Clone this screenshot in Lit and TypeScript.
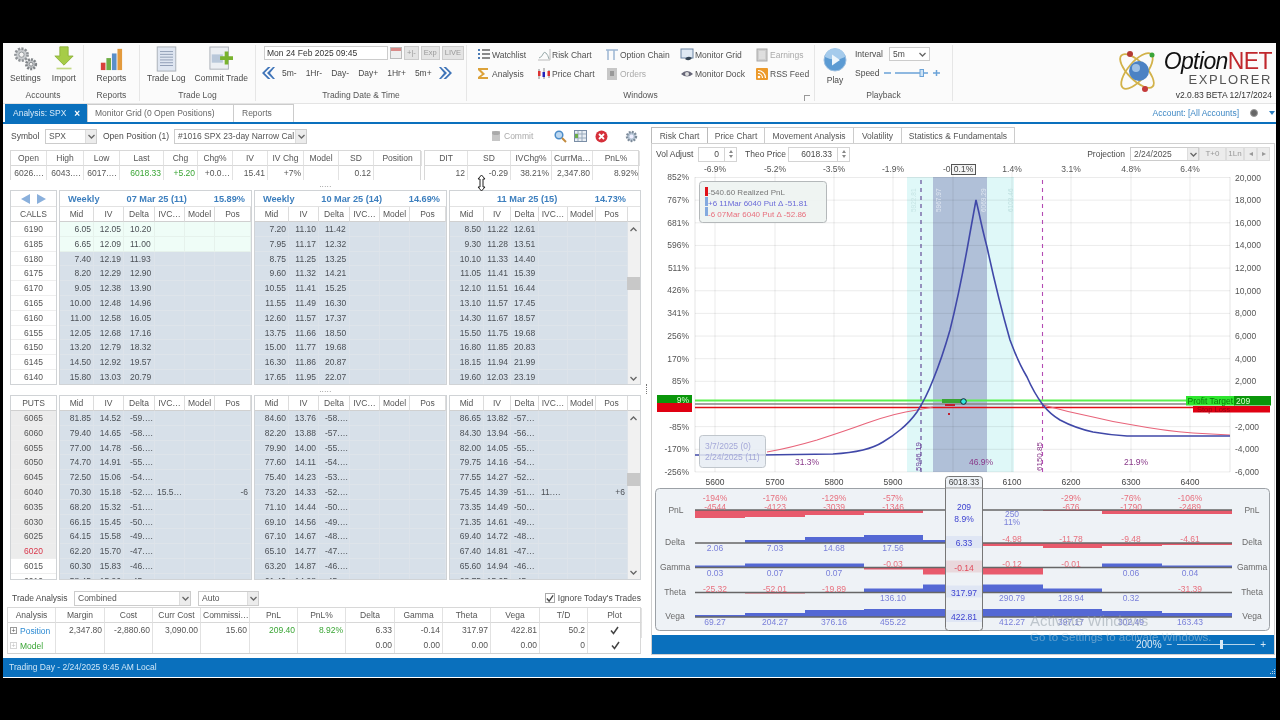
import {customElement} from "lit/decorators.js";
import {css, html, svg, LitElement} from "lit";

// ---- icons -----------------------------------------------------------------
const gears = html`<svg width="30" height="26" viewBox="0 0 34 30">
  <circle cx="13" cy="10" r="7" fill="#c9cccf" stroke="#8f9397" stroke-width="3" stroke-dasharray="2.4 1.6"/>
  <circle cx="13" cy="10" r="3" fill="#f4f4f4" stroke="#8a8e92"/>
  <circle cx="24" cy="21" r="5.5" fill="#c3c6c9" stroke="#7f8387" stroke-width="3" stroke-dasharray="2.2 1.4"/>
  <circle cx="24" cy="21" r="2.2" fill="#f4f4f4" stroke="#7f8387"/>
</svg>`;
const importIcon = html`<svg width="22" height="25" viewBox="0 0 26 30">
  <path d="M8 1h10v11h6L13 23 2 12h6z" fill="#a6cc48" stroke="#8aae36"/>
  <path d="M4 26h18v2H4z" fill="#c3d984"/>
</svg>`;
const barsIcon = html`<svg width="24" height="26" viewBox="0 0 26 28">
  <rect x="2" y="18" width="5" height="8" fill="#d8413c"/><rect x="8" y="13" width="5" height="13" fill="#6fae45"/>
  <rect x="14" y="8" width="5" height="18" fill="#5a8fc9"/><rect x="20" y="3" width="5" height="23" fill="#e39a3d"/>
</svg>`;
const docIcon = html`<svg width="21" height="26" viewBox="0 0 22 28">
  <rect x="1" y="1" width="20" height="26" fill="#dfe6f1" stroke="#a9aeb6"/>
  <path d="M4 6h14M4 9h14M4 12h14M4 15h14M4 18h14M4 21h14" stroke="#8c9bb3"/>
</svg>`;
const commitIcon = html`<svg width="24" height="26" viewBox="0 0 26 28">
  <rect x="1" y="1" width="20" height="24" fill="#eceff3" stroke="#a9aeb6"/>
  <rect x="3" y="9" width="12" height="9" fill="#b9c8da"/>
  <path d="M19 6v14M12 13h14" stroke="#79b32f" stroke-width="4"/>
</svg>`;
const dblLeft = html`<svg width="13" height="12" viewBox="0 0 13 12"><path d="M6 0L0 6l6 6h2.5l-6-6 6-6zM11 0L5 6l6 6h2L8 6l5-6z" fill="#3f74b8"/></svg>`;
const dblRight = html`<svg width="13" height="12" viewBox="0 0 13 12"><path d="M7 0l6 6-6 6H4.5l6-6-6-6zM2 0l6 6-6 6H0l5-6-5-6z" fill="#3f74b8"/></svg>`;
const play = html`<svg width="24" height="24" viewBox="0 0 24 24">
  <circle cx="12" cy="12" r="11" fill="#5c9bd3" stroke="#9dbfe0"/>
  <path d="M2 9a10 9 0 0 1 20 0q-10 5-20 0z" fill="#a5cbec"/>
  <path d="M9 6.5l8 5.5-8 5.5z" fill="#eef6fc"/>
</svg>`;
const chevron = html`<svg width="7" height="5" viewBox="0 0 7 5"><path d="M.5 1l3 3 3-3" fill="none" stroke="#666" stroke-width="1.3"/></svg>`;
const check = html`<svg width="9" height="9" viewBox="0 0 9 9"><path d="M1 4.5l2.5 3L8 1" fill="none" stroke="#444" stroke-width="1.5"/></svg>`;

const winIcons: Record<string, unknown> = {
  list: svg`<path d="M1 2h2M1 6h2M1 10h2" stroke="#4b7bb5" stroke-width="2"/><path d="M5 2h8M5 6h8M5 10h8" stroke="#666" stroke-width="1.3"/>`,
  sigma: svg`<path d="M1 1h10v2H4l4 4-4 3h7v2H1V10l4-3-4-4z" fill="#dca23a"/>`,
  risk: svg`<path d="M1 12h12V1" fill="none" stroke="#bbb"/><path d="M2 10q3-1 4-4t3-1 3 6" fill="none" stroke="#9aa"/>`,
  price: svg`<path d="M2 2v10M7 1v11M12 3v8" stroke="#888"/><rect x="1" y="4" width="2.5" height="5" fill="#d33"/><rect x="5.5" y="5" width="2.5" height="5" fill="#22b"/><rect x="10.5" y="4" width="2.5" height="5" fill="#d33"/>`,
  chain: svg`<path d="M1 2h12M3 2v10M9 2v10" stroke="#9db7d4" stroke-width="1.5" fill="none"/>`,
  orders: svg`<rect x="2" y="1" width="10" height="12" fill="#c7c7c7"/><rect x="5" y="4" width="4" height="5" fill="#999"/>`,
  grid: svg`<rect x="1" y="1" width="12" height="9" fill="#dfe9f4" stroke="#6d85a4"/><path d="M5 11q3-4 7-1 -3 4-7 1z" fill="#345"/>`,
  dock: svg`<path d="M1 7q6-6 12 0-6 5-12 0z" fill="#667"/><circle cx="7" cy="7" r="2" fill="#ddd"/>`,
  earnings: svg`<rect x="2" y="1" width="10" height="12" fill="#cfcfcf" stroke="#aaa"/><path d="M4 4h6M4 6h6M4 8h6M4 10h6" stroke="#eee"/>`,
  rss: svg`<rect x="1" y="1" width="12" height="12" rx="1" fill="#ec9a2b"/><circle cx="4" cy="10" r="1.3" fill="#fff"/><path d="M3 6.5a4.5 4.5 0 0 1 4.5 4.5M3 3.5a7.5 7.5 0 0 1 7.5 7.5" fill="none" stroke="#fff" stroke-width="1.2"/>`,
};
const winIcon = (k: string) => html`<svg width="14" height="14" viewBox="0 0 14 14">${winIcons[k]}</svg>`;

// ---- option chain data -----------------------------------------------------
type Row = [string, string, string, string?, string?];
const parse = (s: string): Row[] => s.trim().split("\n").map((l) => l.trim().split(" ") as Row);

const calls = [
  parse(`6.05 12.05 10.20
    6.65 12.09 11.00
    7.40 12.19 11.93
    8.20 12.29 12.90
    9.05 12.38 13.90
    10.00 12.48 14.96
    11.00 12.58 16.05
    12.05 12.68 17.16
    13.20 12.79 18.32
    14.50 12.92 19.57
    15.80 13.03 20.79`),
  parse(`7.20 11.10 11.42
    7.95 11.17 12.32
    8.75 11.25 13.25
    9.60 11.32 14.21
    10.55 11.41 15.25
    11.55 11.49 16.30
    12.60 11.57 17.37
    13.75 11.66 18.50
    15.00 11.77 19.68
    16.30 11.86 20.87
    17.65 11.95 22.07`),
  parse(`8.50 11.22 12.61
    9.30 11.28 13.51
    10.10 11.33 14.40
    11.05 11.41 15.39
    12.10 11.51 16.44
    13.10 11.57 17.45
    14.30 11.67 18.57
    15.50 11.75 19.68
    16.80 11.85 20.83
    18.15 11.94 21.99
    19.60 12.03 23.19`),
];
const puts = [
  parse(`81.85 14.52 -59.…
    79.40 14.65 -58.…
    77.00 14.78 -56.…
    74.70 14.91 -55.…
    72.50 15.06 -54.…
    70.30 15.18 -52.… 15.5… -6
    68.20 15.32 -51.…
    66.15 15.45 -50.…
    64.15 15.58 -49.…
    62.20 15.70 -47.…
    60.30 15.83 -46.…
    58.45 15.96 -45.…`),
  parse(`84.60 13.76 -58.…
    82.20 13.88 -57.…
    79.90 14.00 -55.…
    77.60 14.11 -54.…
    75.40 14.23 -53.…
    73.20 14.33 -52.…
    71.10 14.44 -50.…
    69.10 14.56 -49.…
    67.10 14.67 -48.…
    65.10 14.77 -47.…
    63.20 14.87 -46.…
    61.40 14.98 -45.…`),
  parse(`86.65 13.82 -57…
    84.30 13.94 -56…
    82.00 14.05 -55…
    79.75 14.16 -54…
    77.55 14.27 -52…
    75.45 14.39 -51… 11.… +6
    73.35 14.49 -50…
    71.35 14.61 -49…
    69.40 14.72 -48…
    67.40 14.81 -47…
    65.60 14.94 -46…
    63.75 15.05 -45…`),
];
const callStrikes = [6190, 6185, 6180, 6175, 6170, 6165, 6160, 6155, 6150, 6145, 6140];
const putStrikes = [6065, 6060, 6055, 6050, 6045, 6040, 6035, 6030, 6025, 6020, 6015, 6010];
const heads = [
  {name: "Weekly", date: "07 Mar 25 (11)", iv: "15.89%"},
  {name: "Weekly", date: "10 Mar 25 (14)", iv: "14.69%"},
  {name: "", date: "11 Mar 25 (15)", iv: "14.73%"},
];

const summaryA = [["Open", "6026.…"], ["High", "6043.…"], ["Low", "6017.…"], ["Last", "6018.33", "g"], ["Chg", "+5.20", "g"], ["Chg%", "+0.0…"], ["IV", "15.41"], ["IV Chg", "+7%"], ["Model", ""], ["SD", "0.12"], ["Position", ""]];
const summaryB = [["DIT", "12"], ["SD", "-0.29"], ["IVChg%", "38.21%"], ["CurrMa…", "2,347.80"], ["PnL%", "8.92%"]];

const analysisHead = ["Analysis", "Margin", "Cost", "Curr Cost", "Commissi…", "PnL", "PnL%", "Delta", "Gamma", "Theta", "Vega", "T/D", "Plot"];
const analysisPos = ["2,347.80", "-2,880.60", "3,090.00", "15.60", "209.40", "8.92%", "6.33", "-0.14", "317.97", "422.81", "50.2"];
const analysisMod = ["", "", "", "", "", "", "0.00", "0.00", "0.00", "0.00", "0"];

// ---- risk chart geometry (page coordinates, via viewBox) -------------------
const leftLabels: [string, number][] = [["852%", 177], ["767%", 200], ["681%", 223], ["596%", 245], ["511%", 268], ["426%", 290], ["341%", 313], ["256%", 336], ["170%", 359], ["85%", 381], ["-85%", 427], ["-170%", 449], ["-256%", 472]];
const rightLabels = ["20,000", "18,000", "16,000", "14,000", "12,000", "10,000", "8,000", "6,000", "4,000", "2,000", "", "-2,000", "-4,000", "-6,000"];
const priceX = [715, 775, 834, 893, 953, 1012, 1071, 1131, 1190];
const topPct = ["-6.9%", "-5.2%", "-3.5%", "-1.9%", "-0.", "1.4%", "3.1%", "4.8%", "6.4%"];
const bottomPrice = ["5600", "5700", "5800", "5900", "", "6100", "6200", "6300", "6400"];

const expiry = "M695 455 L760 455 L833 454 Q850 453 863 450 Q875 447 883 442 Q893 436 900 430 Q910 422 917 412 Q926 398 933 380 Q942 358 950 330 Q960 290 970 233 L976 200 L979 213 Q983 232 987 247 Q998 298 1010 340 Q1018 362 1027 377 Q1034 393 1043 405 Q1050 414 1060 420 Q1075 428 1093 432 Q1110 435 1127 436 L1230 436";
const today = "M767 452 Q790 448 817 440 Q845 431 867 423 Q895 413 917 410 L933 407 M1043 405 Q1068 412 1093 417 Q1113 422 1133 425 Q1165 431 1193 433 L1230 435";

// ---- greek strip -----------------------------------------------------------
// edges of the price buckets under the chart
const edges = [695, 745, 805, 864, 923, 963, 1043, 1102, 1162, 1232];
const cols = [715, 775, 834, 893, 963, 1012, 1071, 1131, 1190];
// per bucket: signed bar height (up positive), label
interface Greek { name: string; y: number; bars: number[]; labels: (string | null)[]; center: string; }
const greeks: Greek[] = [
  {name: "Delta", y: 543, bars: [0, 3, 6, 8, 3, -3, -5, -3, -2], labels: ["2.06", "7.03", "14.68", "17.56", null, "-4.98", "-11.78", "-9.48", "-4.61"], center: "6.33"},
  {name: "Gamma", y: 567.5, bars: [2, 4, 4, -2, -7, -7, 0, 4, 2], labels: ["0.03", "0.07", "0.07", "-0.03", null, "-0.12", "-0.01", "0.06", "0.04"], center: "-0.14"},
  {name: "Theta", y: 592.5, bars: [0, -1, 0, 4, 8, 8, 4, 0, 0], labels: ["-25.32", "-52.01", "-19.89", "136.10", null, "290.79", "128.94", "0.32", "-31.39"], center: "317.97"},
  {name: "Vega", y: 617, bars: [2, 4, 7, 8, 8, 8, 8, 6, 4], labels: ["69.27", "204.27", "376.16", "455.22", null, "412.27", "397.17", "302.49", "163.43"], center: "422.81"},
];
const pnlBars = [-8, -7, -5, -3, 0, 0, -1, -4, -4];
const pnlPct = ["-194%", "-176%", "-129%", "-57%", "", "", "-29%", "-76%", "-106%"];
const pnlVal = ["-4544", "-4123", "-3039", "-1346", "", "", "-676", "-1790", "-2489"];

@customElement("app-root")
export class AppRoot extends LitElement {
  static styles = css`
    * { box-sizing: border-box; }
    :host {
      --blue: #0a70bd;
      display: block;
      width: 1280px;
      height: 720px;
      font-family: "Liberation Sans", Arial, sans-serif;
      font-size: 8.5px;
      color: #4a4a4a;
    }
    .frame {
      width: 1280px;
      height: 720px;
      background: #000;
      padding: 43px 4px 42px 3px;
      filter: blur(0.35px);
      overflow: hidden;
      position: relative;
    }
    .window { height: 635px; background: #fff; display: flex; flex-direction: column; }

    /* ribbon */
    .ribbon { height: 61px; display: flex; background: #fbfbfb; border-bottom: 1px solid #e4e4e4; }
    .group { display: flex; flex-direction: column; border-right: 1px solid #e6e6e6; margin: 2px 0; position: relative; }
    .group-body { flex: 1; display: flex; }
    .group-label { text-align: center; height: 11px; line-height: 11px; color: #555; }
    .big { display: flex; flex-direction: column; align-items: center; justify-content: space-between; padding: 1px 0 2px; height: 40px; }
    .g-accounts { width: 81px; }
    .g-reports { width: 56px; }
    .g-tradelog { width: 116px; }
    .g-date { width: 211px; }
    .g-windows { width: 348px; }
    .g-play { width: 138px; }
    .g-accounts .group-body { justify-content: center; gap: 11px; }
    .g-reports .group-body { justify-content: center; }
    .g-tradelog .group-body { justify-content: center; gap: 9px; }
    .date-col { padding: 1px 0 0 8px; display: flex; flex-direction: column; }
    .date-row { display: flex; gap: 2px; height: 15px; }
    .date-input { width: 124px; height: 14px; border: 1px solid #ccc; background: #fff; padding-left: 2px; line-height: 12px; color: #333; }
    .ghost { height: 14px; border: 1px solid #ccc; background: #e4e4e4; color: #999; line-height: 12px; padding: 0 2px; font-size: 7.5px; }
    .calendar { width: 12px; height: 12px; background: linear-gradient(#d98a88 30%, #eee 30%); border: 1px solid #bbb; margin-top: 1px; }
    .step-row { display: flex; align-items: center; gap: 9px; margin-top: 5px; height: 14px; }
    .step-row svg { flex: none; margin: 0 -2px; }
    .win-grid { display: grid; grid-template-columns: 60px 68px 75px 75px 60px; grid-auto-rows: 19px; padding-left: 10px; }
    .win-item { display: flex; align-items: center; gap: 1px; white-space: nowrap; color: #505050; }
    .win-item.off { color: #aaa; }
    .launcher { position: absolute; right: 4px; bottom: 0; width: 6px; height: 6px; border-left: 1px solid #999; border-top: 1px solid #999; }
    .play-body { padding-left: 8px; gap: 8px; }
    .play-col { display: flex; flex-direction: column; align-items: center; gap: 3px; padding-top: 3px; }
    .play-side { display: flex; flex-direction: column; gap: 5px; padding-top: 2px; }
    .side-row { display: flex; align-items: center; height: 14px; }
    .side-name { width: 34px; }
    .speed-name { width: 29px; }
    .mini-select { width: 41px; height: 14px; border: 1px solid #ccc; display: flex; justify-content: space-between; align-items: center; padding: 0 3px; background: #fff; }
    .logo { flex: 1; display: flex; justify-content: flex-end; padding-right: 4px; gap: 3px; }
    .atom { margin-top: 2px; }
    .logo-text { display: flex; flex-direction: column; align-items: flex-end; padding-top: 6px; }
    .logo-name { font-style: italic; font-size: 23px; letter-spacing: -0.6px; color: #111; line-height: 25px; }
    .logo-name b { font-style: normal; font-weight: 400; color: #c0282d; }
    .logo-sub { font-size: 13px; letter-spacing: 1.6px; color: #555; line-height: 11px; }
    .logo-ver { font-size: 8.5px; color: #333; margin-top: 5px; line-height: 10px; }

    /* document tabs */
    .doc-tabs { height: 20px; display: flex; align-items: flex-end; border-bottom: 2px solid var(--blue); padding-left: 2px; }
    .doc-tab { height: 18px; border: 1px solid #ccc; border-bottom: 0; line-height: 17px; padding-left: 7px; color: #666; margin-left: -1px; }
    .doc-tab.active { width: 83px; background: var(--blue); color: #d8eaf8; border-color: var(--blue); display: flex; justify-content: space-between; padding-right: 7px; margin: 0; }
    .doc-tab.active b { color: #fff; font-size: 10px; font-weight: 700; }
    .tab-grid { width: 147px; }
    .tab-reports { width: 61px; padding-left: 8px; }
    .account { margin-left: auto; height: 18px; display: flex; align-items: center; gap: 8px; color: #3d87c4; padding-right: 1px; }
    .dot { width: 8px; height: 8px; border-radius: 50%; background: #666; border: 1px solid #999; margin-left: 3px; }
    .tri { width: 0; height: 0; border: 3px solid transparent; border-top: 4px solid #2d7fc0; margin: 3px 0 0 3px; }

    /* main content */
    .content { height: 533px; display: flex; }
    .left { width: 648px; padding: 0 10px 0 7px; display: flex; flex-direction: column; position: relative; }
    .right { flex: 1; padding: 3px 0 2px; display: flex; flex-direction: column; }

    .tool { height: 24px; display: flex; align-items: center; }
    .select { height: 15px; border: 1px solid #ccc; display: flex; align-items: center; justify-content: space-between; padding-left: 3px; background: #fff; color: #555; }
    .select i { width: 11px; height: 13px; display: flex; align-items: center; justify-content: center; background: #ececec; border-left: 1px solid #ddd; }
    .tool-right { margin-left: auto; display: flex; align-items: center; padding-right: 3px; }
    .lbl-symbol { width: 35px; padding-left: 1px; }
    .sel-symbol { width: 52px; }
    .lbl-open { width: 77px; padding-left: 6px; }
    .sel-open { width: 133px; }
    .ic-commit { margin-right: 2px; }
    .lbl-commit { color: #aaa; width: 50px; }
    .ic-search { margin-right: 7px; }
    .ic-table { margin-right: 8px; }
    .ic-close { margin-right: 17px; }

    .summary { height: 30px; margin-top: 2px; padding-right: 2px; display: flex; justify-content: space-between; }
    .grid { display: grid; border: 1px solid #d8d8d8; border-bottom: 0; }
    .grid > div { height: 14.5px; line-height: 14px; border-right: 1px solid #e2e2e2; white-space: nowrap; overflow: hidden; padding: 0 2px; }
    .grid > div:last-child { border-right: 0; }
    .grid .th { text-align: center; border-bottom: 1px solid #d8d8d8; color: #555; }
    .grid .td { text-align: right; color: #555; }
    .sum-a { width: 411px; grid-template-columns: 36px 37px 36px 44px 34px 35px 35px 36px 35px 35px 48px; }
    .sum-b { width: 215px; grid-template-columns: 43px 43px 41px 41px 47px; }
    .g { color: #3aa535 !important; }

    .dots { height: 10px; text-align: center; font-size: 7px; line-height: 9px; letter-spacing: 0.5px; color: #666; }
    .chains { display: flex; gap: 2px; overflow: hidden; }
    .c-top { height: 195px; }
    .c-bot { height: 185px; }
    .col { border: 1px solid #d0d3d6; flex: none; overflow: hidden; }
    .strike { width: 47px; text-align: center; }
    .ch { width: 193px; }
    .ch.last { width: 192px; }
    .cell { height: 14.8px; line-height: 14px; border-bottom: 1px solid #eeeeee; color: #555; }
    .top-head { height: 16px; display: flex; justify-content: space-between; align-items: center; border-bottom: 1px solid #e2e2e2; padding: 0 6px 0 8px; color: #3d7fbe; font-weight: 700; font-size: 9.2px; white-space: nowrap; }
    .top-head.s3 { padding: 0 14px 0 47px; }
    .arrows { justify-content: center; gap: 5px; padding: 0; }
    .hd { height: 15px; line-height: 14px; border-bottom: 1px solid #d0d0d0; color: #555; text-align: center; }
    .row { display: grid; height: 14.8px; }
    .cols { grid-template-columns: 34px 30px 31px 30px 30px 36px; }
    .cols3 { grid-template-columns: 34px 27px 28px 29px 28px 32px 13px; }
    .row > span { display: block; line-height: 14px; padding: 0 2px; white-space: nowrap; overflow: hidden; color: #4c5056; border-right: 1px solid #dde3ea; border-bottom: 1px solid #dee4ea; }
    .row.hdr { height: 15px; }
    .row.hdr > span { line-height: 14px; text-align: center; color: #555; border-right: 1px solid #dcdcdc; border-bottom: 1px solid #d0d0d0; background: #fff; padding: 0; }
    .row.data > span { background: #d7e0e9; }
    .row.fresh > span { background: #effdf7; border-color: #e6f2ec; }
    .row.data > span.num { text-align: right; }
    .cols > span.delta { padding-left: 6px; }
    .cols3 > span.delta { padding-left: 3px; }
    .row.data > span.sb { background: #f1f1f1; border: 0; padding: 0; }
    .put-strike { background: #ececec; }
    .put-strike.white { background: #fff; }
    .put-strike.red { color: #d9364a; }
    .body-wrap { position: relative; }
    .thumb { position: absolute; right: 0; width: 13px; height: 13px; background: #c8c8c8; }
    .thumb.in-calls { top: 55px; }
    .thumb.in-puts { top: 62px; }
    .sb-up, .sb-down { position: absolute; right: 3px; width: 7px; line-height: 0; }
    .sb-up { top: 5px; transform: rotate(180deg); }
    .sb-down { bottom: 4px; }
    .c-bot .sb-down { bottom: 14px; }

    .trade-row { height: 18px; margin-top: 9px; display: flex; align-items: center; padding-left: 2px; }
    .lbl-trade { width: 62px; }
    .sel-combined { width: 117px; }
    .sel-auto { width: 61px; margin-left: 7px; }
    .ignore { margin-left: auto; display: flex; gap: 3px; align-items: center; }
    .check { width: 10px; height: 10px; border: 1px solid #aaa; background: #fff; display: inline-flex; align-items: center; justify-content: center; }
    .analysis { width: 634px; margin-left: -3px; border-bottom: 1px solid #d0d0d0; grid-template-columns: 48px 49px 48px 48px 49px 48px 48px 49px 48px 48px 49px 48px 54px; }
    .analysis > div { height: 15px; }
    .analysis .name { text-align: left; display: flex; gap: 3px; align-items: center; padding-left: 2px; }
    .plus { width: 7px; height: 7px; border: 1px solid #999; font-size: 7px; line-height: 5px; text-align: center; flex: none; color: #555; }
    .plus.dim { opacity: 0.4; }
    .link { color: #2d8bd3; }
    .model { color: #3aa535; }
    .analysis .cen { display: flex; align-items: center; justify-content: center; }
    .splitter { position: absolute; right: 3px; top: 260px; width: 2px; height: 10px; border-left: 1px dotted #777; }

    /* right pane */
    .r-tabs { height: 16px; display: flex; align-items: flex-end; }
    .r-tab { height: 16px; line-height: 16px; border: 1px solid #ccc; border-bottom: 0; text-align: center; margin-left: -1px; color: #555; }
    .r-tab.active { height: 17px; margin: 0 0 -1px 0; background: #fff; position: relative; border-color: #bbb; }
    .t-risk { width: 57px; }
    .t-price { width: 58px; }
    .t-move { width: 90px; }
    .t-vol { width: 49px; }
    .t-stat { width: 114px; }
    .r-body { flex: 1; border: 1px solid #d0d0d0; display: flex; flex-direction: column; margin-right: 1px; position: relative; }
    .r-tool { height: 20px; display: flex; align-items: center; padding: 0 4px; }
    .lbl-vol { width: 42px; }
    .lbl-theo { width: 51px; padding-left: 8px; }
    .num-box { height: 15px; border: 1px solid #d4d4d4; background: #fff; text-align: right; line-height: 13px; padding-right: 5px; }
    .num-vol { width: 27px; }
    .num-theo { width: 50px; }
    .spin { width: 12px; height: 15px; border: 1px solid #d4d4d4; border-left: 0; display: flex; flex-direction: column; align-items: center; justify-content: center; gap: 2px; }
    .spin i { width: 0; height: 0; border: 2.5px solid transparent; }
    .spin i:first-child { border-bottom: 3px solid #888; border-top: 0; }
    .spin i:last-child { border-top: 3px solid #888; border-bottom: 0; }
    .lbl-proj { margin-left: auto; padding-right: 5px; }
    .sel-date { width: 69px; height: 14px; }
    .sel-date i { height: 12px; }
    .btn { height: 14px; border: 1px solid #ddd; background: #ececec; color: #999; line-height: 12px; text-align: center; font-size: 8px; }
    .b-t0 { width: 27px; }
    .b-ln { width: 18px; }
    .b-ar { width: 13px; }
    .chart { display: block; width: 622px; height: 325px; }
    .strip { display: block; width: 622px; height: 146px; overflow: visible; }
    svg text { font-family: "Liberation Sans", Arial, sans-serif; }
    .zoom-bar { height: 19px; background: var(--blue); }
    .status { height: 19px; margin-top: 1px; background: var(--blue); color: #cfe6f7; line-height: 19px; padding-left: 6px; }

    /* things painted over the window */
    .watermark { position: absolute; color: rgba(150, 160, 170, 0.55); white-space: nowrap; }
    .wm1 { left: 1030px; top: 612px; font-size: 15px; }
    .wm2 { left: 1030px; top: 631px; font-size: 11.5px; color: rgba(190, 210, 225, 0.5); }
    .zoom-ctl { position: absolute; left: 1136px; top: 639px; height: 11px; width: 130px; display: flex; align-items: center; gap: 5px; color: #dbeaf6; font-size: 10px; }
    .zoom-track { flex: 1; height: 1px; background: #b6d4ea; position: relative; }
    .zoom-track i { position: absolute; left: 43px; top: -4px; width: 3px; height: 9px; background: #d8e9f6; }
    .cursor { position: absolute; left: 477px; top: 174px; }
    .grip { position: absolute; left: 1268px; top: 668px; }
  `;

  renderChain(rows: Row[], idx: number, isPut: boolean) {
    const last = idx === 2;
    const cls = last ? "cols3" : "cols";
    const head = heads[idx];
    return html`<div class="col ch ${last ? "last" : ""}">
      ${isPut ? "" : html`<div class="top-head ${last ? "s3" : ""}">
        ${head.name ? html`<span>${head.name}</span>` : ""}<span>${head.date}</span><span>${head.iv}</span></div>`}
      <div class="row hdr ${cls}">
        ${["Mid", "IV", "Delta", "IVC…", "Model", "Pos"].map((h) => html`<span>${h}</span>`)}${last ? html`<span></span>` : ""}
      </div>
      <div class="body-wrap">
        ${rows.map((r, i) => html`<div class="row data ${cls} ${!isPut && idx === 0 && i < 2 ? "fresh" : ""}">
          <span class="num">${r[0]}</span><span class="num">${r[1]}</span><span class="delta">${r[2]}</span>
          <span>${r[3] ?? ""}</span><span></span><span class="num">${r[4] ?? ""}</span>
          ${last ? html`<span class="sb"></span>` : ""}
        </div>`)}
        ${last ? html`<div class="thumb ${isPut ? "in-puts" : "in-calls"}"></div>
          <div class="sb-up">${chevron}</div><div class="sb-down">${chevron}</div>` : ""}
      </div>
    </div>`;
  }

  renderChart() {
    return svg`
      <rect x="907" y="177" width="107" height="295" fill="#dff8f8"/>
      <rect x="933" y="177" width="54" height="295" fill="#b0c0d8"/>
      ${rightLabels.map((_, i) => svg`<line x1="695" x2="1230" y1=${177.5 + i * 22.65} y2=${177.5 + i * 22.65} stroke="#000" stroke-opacity=".08"/>`)}
      ${priceX.map((x) => svg`<line x1=${x} x2=${x} y1="172" y2="472" stroke="#000" stroke-opacity=".08"/>`)}
      <line x1="695" x2="695" y1="177" y2="472" stroke="#000" stroke-opacity=".1"/>
      <line x1="1230" x2="1230" y1="177" y2="472" stroke="#000" stroke-opacity=".1"/>
      <g font-size="6.5">
        <text transform="translate(916 212) rotate(-90)" fill="#c5e4e4">5922.81</text>
        <text transform="translate(941 212) rotate(-90)" fill="#dfe6f0">5967.97</text>
        <text transform="translate(986 212) rotate(-90)" fill="#dfe6f0">6069.29</text>
        <text transform="translate(1013 212) rotate(-90)" fill="#bfe0e0">6103.46</text>
      </g>
      <line x1="921" x2="921" y1="180" y2="472" stroke="#5a3d8f" stroke-width="1.1" stroke-dasharray="4 4"/>
      <line x1="1042.5" x2="1042.5" y1="180" y2="472" stroke="#b44bb4" stroke-width="1.1" stroke-dasharray="4 4"/>
      <g font-size="8" fill="#8a3a8a">
        <text transform="translate(921 471) rotate(-90)" fill="#6a3d99">5946.19</text>
        <text transform="translate(1042 471) rotate(-90)">6150.85</text>
      </g>
      <line x1="695" x2="1186" y1="400.5" y2="400.5" stroke="#5cf04f" stroke-width="2"/>
      <line x1="695" x2="1230" y1="404" y2="404" stroke="#888" stroke-width="1.5"/>
      <line x1="695" x2="1193" y1="407.5" y2="407.5" stroke="#e01018" stroke-width="1.5"/>
      <path d=${today} fill="none" stroke="#e8647a" stroke-width="1.1"/>
      <path d=${expiry} fill="none" stroke="#4048a8" stroke-width="1.6"/>
      <g>
        <rect x="942" y="399" width="22" height="4" fill="#3aa535"/>
        <circle cx="963.5" cy="401.5" r="2.8" fill="#35e8e0" stroke="#123"/>
        <rect x="948" y="413" width="2" height="2" fill="#c02030"/>
        <rect x="945" y="404" width="10" height="2" fill="#c02030"/>
      </g>
      <rect x="657" y="395" width="35" height="8" fill="#0a960a"/>
      <rect x="657" y="403" width="35" height="9" fill="#e00012"/>
      <text x="689" y="403" font-size="8.5" fill="#d8ffd0" text-anchor="end">9%</text>
      <rect x="1186" y="396" width="49" height="9.5" fill="#2ee62e"/>
      <rect x="1234" y="396" width="37" height="9.5" fill="#0a960a"/>
      <rect x="1193" y="406" width="77" height="6.5" fill="#e00012"/>
      <text x="1187.5" y="404" font-size="8.5" fill="#077a07">Profit Target</text>
      <text x="1236" y="404" font-size="8.5" fill="#d8ffd0">209</text>
      <text x="1197" y="412" font-size="7.5" fill="#900010">Stop Loss</text>
      <g font-size="8.5" fill="#555">
        ${leftLabels.map(([t, y]) => svg`<text x="689" y=${y + 3} text-anchor="end">${t}</text>`)}
        ${rightLabels.map((t, i) => svg`<text x="1235" y=${180.5 + i * 22.65}>${t}</text>`)}
        ${priceX.map((x, i) => svg`<text x=${i === 4 ? 943 : x} y="172" text-anchor=${i === 4 ? "start" : "middle"}>${topPct[i]}</text>`)}
        ${priceX.map((x, i) => svg`<text x=${x} y="484.5" text-anchor="middle" fill="#444">${bottomPrice[i]}</text>`)}
      </g>
      <rect x="951.5" y="164.5" width="24" height="10" fill="#f4f4f4" stroke="#555"/>
      <text x="963.5" y="172" font-size="8.5" text-anchor="middle" fill="#444">0.1%</text>
      <g font-size="8.5" fill="#8a3a8a" text-anchor="middle">
        <text x="807" y="465">31.3%</text>
        <text x="981" y="465">46.9%</text>
        <text x="1136" y="465">21.9%</text>
      </g>
      <rect x="699.5" y="181.5" width="127" height="41" rx="3" fill="#eef3f1" fill-opacity=".92" stroke="#b4b8ba"/>
      <rect x="705" y="187" width="3" height="9" fill="#e01018"/>
      <rect x="705" y="197" width="3" height="9" fill="#84aadf"/>
      <rect x="705" y="207" width="3" height="9" fill="#84aadf"/>
      <g font-size="8">
        <text x="708" y="195" fill="#777">-540.60 Realized PnL</text>
        <text x="708" y="206" fill="#6b6bd8">+6 11Mar 6040 Put Δ  -51.81</text>
        <text x="708" y="217" fill="#e8707e">-6 07Mar 6040 Put Δ  -52.86</text>
      </g>
      <rect x="699.5" y="435.5" width="66" height="32" rx="3" fill="#e6ecf3" fill-opacity=".85" stroke="#c0c6cc"/>
      <g font-size="8.5" fill="#a4a8d8">
        <text x="705" y="449">3/7/2025 (0)</text>
        <text x="705" y="460">2/24/2025 (11)</text>
      </g>`;
  }

  renderStrip() {
    const bar = (x1: number, x2: number, y: number, h: number) => {
      const up = h >= 0;
      const a = Math.abs(h);
      return svg`<rect x=${x1} y=${up ? y - a : y} width=${x2 - x1} height=${a} fill=${up ? "#5468d4" : "#e85a6c"}/>
        <line x1=${x1} x2=${x2} y1=${y} y2=${y} stroke="#666" stroke-width="1.3"/>`;
    };
    const bars = (g: {y: number; bars: number[]}) => g.bars.map((h, i) => bar(edges[i], edges[i + 1], g.y, h));
    return svg`
      <rect x="655.5" y="488.5" width="614" height="142" rx="4" fill="#eef2f6" stroke="#9ca1a6"/>
      <g font-size="8.5" fill="#6a6a6a">
        <text x="676" y="513" text-anchor="middle">PnL</text>
        <text x="1252" y="513" text-anchor="middle">PnL</text>
        ${greeks.map((g) => svg`
          <text x="675" y=${g.y + 2} text-anchor="middle">${g.name}</text>
          <text x="1252" y=${g.y + 2} text-anchor="middle">${g.name}</text>`)}
      </g>
      ${bars({y: 510, bars: pnlBars})}
      ${greeks.map((g) => bars(g))}
      <g font-size="8.5" text-anchor="middle">
        ${cols.map((x, i) => svg`
          <text x=${x} y="501" fill="#e8707e">${pnlPct[i]}</text>
          <text x=${x} y="510" fill="#e8707e">${pnlVal[i]}</text>`)}
        ${greeks.map((g) => g.labels.map((t, i) => {
          if (t === null) return "";
          const neg = t.startsWith("-");
          return svg`<text x=${cols[i]} y=${neg ? g.y - 1 : g.y + 8} fill=${neg ? "#e8707e" : "#7a80da"}>${t}</text>`;
        }))}
        <text x="1012" y="517" fill="#7a80da">250</text>
        <text x="1012" y="525" fill="#7a80da">11%</text>
      </g>
      <rect x="945.5" y="476.5" width="37" height="154" rx="3" fill="#eef2f6" stroke="#777"/>
      <line x1="945.5" x2="982.5" y1="488" y2="488" stroke="#999"/>
      <text x="964" y="485" font-size="8.5" text-anchor="middle" fill="#444">6018.33</text>
      <g font-size="8.5" text-anchor="middle" fill="#3a3fd0">
        <text x="964" y="510">209</text>
        <text x="964" y="522">8.9%</text>
        ${greeks.map((g, i) => svg`
          <rect x="946" y=${g.y - 7} width="36" height="12" fill=${i === 1 ? "#e9d8dc" : "#dfe6f4"}/>
          <text x="964" y=${g.y + 3} fill=${i === 1 ? "#e04a5a" : "#3a3fd0"}>${g.center}</text>`)}
      </g>`;
  }

  render() {
    return html`<div class="frame"><div class="window">
      <div class="ribbon">
        <div class="group g-accounts"><div class="group-body">
          <div class="big">${gears}<span>Settings</span></div>
          <div class="big">${importIcon}<span>Import</span></div>
        </div><div class="group-label">Accounts</div></div>
        <div class="group g-reports"><div class="group-body">
          <div class="big">${barsIcon}<span>Reports</span></div>
        </div><div class="group-label">Reports</div></div>
        <div class="group g-tradelog"><div class="group-body">
          <div class="big">${docIcon}<span>Trade Log</span></div>
          <div class="big">${commitIcon}<span>Commit Trade</span></div>
        </div><div class="group-label">Trade Log</div></div>
        <div class="group g-date"><div class="group-body"><div class="date-col">
          <div class="date-row">
            <div class="date-input">Mon 24 Feb 2025 09:45</div><div class="calendar"></div>
            <div class="ghost">+|-</div><div class="ghost">Exp</div><div class="ghost">LIVE</div>
          </div>
          <div class="step-row">
            ${dblLeft}${["5m-", "1Hr-", "Day-", "Day+", "1Hr+", "5m+"].map((s) => html`<span>${s}</span>`)}${dblRight}
          </div>
        </div></div><div class="group-label">Trading Date &amp; Time</div></div>
        <div class="group g-windows"><div class="group-body"><div class="win-grid">
          <div class="win-item">${winIcon("list")}Watchlist</div>
          <div class="win-item">${winIcon("risk")}Risk Chart</div>
          <div class="win-item">${winIcon("chain")}Option Chain</div>
          <div class="win-item">${winIcon("grid")}Monitor Grid</div>
          <div class="win-item off">${winIcon("earnings")}Earnings</div>
          <div class="win-item">${winIcon("sigma")}Analysis</div>
          <div class="win-item">${winIcon("price")}Price Chart</div>
          <div class="win-item off">${winIcon("orders")}Orders</div>
          <div class="win-item">${winIcon("dock")}Monitor Dock</div>
          <div class="win-item">${winIcon("rss")}RSS Feed</div>
        </div></div><div class="group-label">Windows</div><div class="launcher"></div></div>
        <div class="group g-play"><div class="group-body play-body">
          <div class="play-col">${play}<span>Play</span></div>
          <div class="play-side">
            <div class="side-row"><span class="side-name">Interval</span><span class="mini-select">5m ${chevron}</span></div>
            <div class="side-row"><span class="speed-name">Speed</span>
              <svg width="56" height="10" viewBox="0 0 56 10"><path d="M0 5h7M11 5h26M40 5h4M49 5h7M52.5 2v6" stroke="#6ba3d8" stroke-width="1.5"/><rect x="36" y="1.5" width="3.5" height="7" fill="#cfe3f5" stroke="#6ba3d8"/></svg>
            </div>
          </div>
        </div><div class="group-label">Playback</div></div>
        <div class="logo">
          <svg class="atom" width="46" height="50" viewBox="0 0 46 50">
            <g fill="none" stroke="#d2b24a" stroke-width="1.8">
              <ellipse cx="22" cy="26" rx="22" ry="9" transform="rotate(45 22 26)"/>
              <ellipse cx="22" cy="26" rx="22" ry="9" transform="rotate(-50 22 26)"/>
            </g>
            <circle cx="24" cy="26" r="10" fill="#4c82c4"/><circle cx="21" cy="23" r="4" fill="#9dc0e6"/>
            <circle cx="15" cy="9" r="3" fill="#b33a34"/><circle cx="37" cy="10" r="2.5" fill="#3aa53a"/><circle cx="30" cy="44" r="3" fill="#c43a3a"/>
          </svg>
          <div class="logo-text">
            <div class="logo-name">Option<b>NET</b></div>
            <div class="logo-sub">EXPLORER</div>
            <div class="logo-ver">v2.0.83 BETA 12/17/2024</div>
          </div>
        </div>
      </div>

      <div class="doc-tabs">
        <div class="doc-tab active"><span>Analysis: SPX</span><b>×</b></div>
        <div class="doc-tab tab-grid">Monitor Grid (0 Open Positions)</div>
        <div class="doc-tab tab-reports">Reports</div>
        <div class="account">Account: [All Accounts]<span class="dot"></span><span class="tri"></span></div>
      </div>

      <div class="content">
        <div class="left">
          <div class="tool">
            <span class="lbl-symbol">Symbol</span>
            <div class="select sel-symbol">SPX <i>${chevron}</i></div>
            <span class="lbl-open">Open Position (1)</span>
            <div class="select sel-open">#1016 SPX 23-day Narrow Cal <i>${chevron}</i></div>
            <div class="tool-right">
              <svg class="ic-commit" width="12" height="12" viewBox="0 0 12 12"><rect x="2" y="1" width="8" height="10" fill="#c6c6c6"/><ellipse cx="6" cy="3" rx="4" ry="2" fill="#aaa"/></svg>
              <span class="lbl-commit">Commit</span>
              <svg class="ic-search" width="13" height="13" viewBox="0 0 13 13"><circle cx="5" cy="5" r="3.8" fill="#bcd7f0" stroke="#4b8cc8" stroke-width="1.5"/><path d="M8 8l4 4" stroke="#c28a3d" stroke-width="2"/></svg>
              <svg class="ic-table" width="13" height="12" viewBox="0 0 13 12"><rect x=".5" y=".5" width="12" height="11" fill="#e8eef4" stroke="#7a8ea6"/><path d="M4 1v10M8 1v10M1 4h11M1 8h11" stroke="#9ab"/><rect x="1" y="4" width="3" height="4" fill="#6cae4a"/></svg>
              <svg class="ic-close" width="13" height="13" viewBox="0 0 13 13"><circle cx="6.5" cy="6.5" r="6" fill="#d5303a"/><path d="M4 4l5 5M9 4l-5 5" stroke="#fff" stroke-width="1.8"/></svg>
              <svg width="13" height="13" viewBox="0 0 13 13"><circle cx="6.5" cy="6.5" r="4.5" fill="#b7c6d6" stroke="#7c8a99" stroke-width="2.4" stroke-dasharray="1.8 1.2"/><circle cx="6.5" cy="6.5" r="2" fill="#eef"/></svg>
            </div>
          </div>

          <div class="summary">
            <div class="grid sum-a">
              ${summaryA.map(([h]) => html`<div class="th">${h}</div>`)}
              ${summaryA.map(([, v, c]) => html`<div class="td ${c ?? ""}">${v}</div>`)}
            </div>
            <div class="grid sum-b">
              ${summaryB.map(([h]) => html`<div class="th">${h}</div>`)}
              ${summaryB.map(([, v]) => html`<div class="td">${v}</div>`)}
            </div>
          </div>
          <div class="dots">.....</div>

          <div class="chains c-top">
            <div class="col strike">
              <div class="top-head arrows">
                <svg width="10" height="10" viewBox="0 0 10 10"><path d="M9 0v10L0 5z" fill="#8ab0dc"/></svg>
                <svg width="10" height="10" viewBox="0 0 10 10"><path d="M1 0v10l9-5z" fill="#8ab0dc"/></svg>
              </div>
              <div class="hd">CALLS</div>
              ${callStrikes.map((s) => html`<div class="cell">${s}</div>`)}
            </div>
            ${calls.map((rows, i) => this.renderChain(rows, i, false))}
          </div>
          <div class="dots">.....</div>
          <div class="chains c-bot">
            <div class="col strike">
              <div class="hd">PUTS</div>
              ${putStrikes.map((s) => html`<div class="cell put-strike ${s === 6020 ? "red" : ""} ${s <= 6015 ? "white" : ""}">${s}</div>`)}
            </div>
            ${puts.map((rows, i) => this.renderChain(rows, i, true))}
          </div>

          <div class="trade-row">
            <span class="lbl-trade">Trade Analysis</span>
            <div class="select sel-combined">Combined <i>${chevron}</i></div>
            <div class="select sel-auto">Auto <i>${chevron}</i></div>
            <span class="ignore"><span class="check">${check}</span>Ignore Today's Trades</span>
          </div>
          <div class="grid analysis">
            ${analysisHead.map((h) => html`<div class="th">${h}</div>`)}
            <div class="td name"><span class="plus">+</span><span class="link">Position</span></div>
            ${analysisPos.map((v, i) => html`<div class="td ${i === 4 || i === 5 ? "g" : ""}">${v}</div>`)}
            <div class="td cen">${check}</div>
            <div class="td name"><span class="plus dim">+</span><span class="model">Model</span></div>
            ${analysisMod.map((v) => html`<div class="td">${v}</div>`)}
            <div class="td cen">${check}</div>
          </div>
          <div class="splitter"></div>
        </div>

        <div class="right">
          <div class="r-tabs">
            <div class="r-tab active t-risk">Risk Chart</div>
            <div class="r-tab t-price">Price Chart</div>
            <div class="r-tab t-move">Movement Analysis</div>
            <div class="r-tab t-vol">Volatility</div>
            <div class="r-tab t-stat">Statistics &amp; Fundamentals</div>
          </div>
          <div class="r-body">
            <div class="r-tool">
              <span class="lbl-vol">Vol Adjust</span>
              <div class="num-box num-vol">0</div><div class="spin"><i></i><i></i></div>
              <span class="lbl-theo">Theo Price</span>
              <div class="num-box num-theo">6018.33</div><div class="spin"><i></i><i></i></div>
              <span class="lbl-proj">Projection</span>
              <div class="select sel-date">2/24/2025 <i>${chevron}</i></div>
              <div class="btn b-t0">T+0</div>
              <div class="btn b-ln">1Ln</div>
              <div class="btn b-ar">◂</div>
              <div class="btn b-ar">▸</div>
            </div>
            <svg class="chart" viewBox="652 164 622 325">${this.renderChart()}</svg>
            <svg class="strip" viewBox="652 489 622 146">${this.renderStrip()}</svg>
            <div class="zoom-bar"></div>
          </div>
        </div>
      </div>

      <div class="status">Trading Day - 2/24/2025 9:45 AM Local</div>
    </div>
    <div class="watermark wm1">Activate Windows</div>
    <div class="watermark wm2">Go to Settings to activate Windows.</div>
    <div class="zoom-ctl"><span>200%</span><span>−</span><div class="zoom-track"><i></i></div><span>+</span></div>
    <svg class="cursor" width="9" height="18" viewBox="0 0 9 18"><path d="M4.5 1L8 5H6v8h2l-3.5 4L1 13h2V5H1z" fill="#fff" stroke="#222"/></svg>
    <svg class="grip" width="8" height="8" viewBox="0 0 8 8"><path d="M6 1h1v1H6zM4 3h1v1H4zM6 3h1v1H6zM2 5h1v1H2zM4 5h1v1H4zM6 5h1v1H6z" fill="#b8d2e6"/></svg>
    </div>`;
  }
}
